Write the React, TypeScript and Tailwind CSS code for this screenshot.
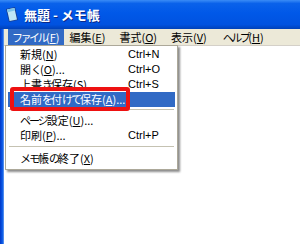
import React from "react";

type Item = { label: string; key: string; tail?: string; shortcut?: string; active?: boolean };

// kana in the original UI font are narrower than in Noto CJK
function Narrow({ text, wide }: { text: string; wide?: boolean }) {
  return (
    <>
      {Array.from(text).map((ch, i) =>
        /[\u3040-\u30ff]/.test(ch) ? (
          <span key={i} className={wide ? "tracking-[-2.5px]" : "tracking-[-2px]"}>
            {ch}
          </span>
        ) : (
          <span key={i}>{ch}</span>
        )
      )}
    </>
  );
}

function Mn({ label, k, tail, wide }: { label: string; k: string; tail?: string; wide?: boolean }) {
  return (
    <span className="whitespace-nowrap">
      <Narrow text={label} wide={wide} />(<span className="underline underline-offset-1">{k}</span>){tail}
    </span>
  );
}

function NotepadIcon() {
  return (
    <svg width="16" height="17" viewBox="0 0 16 17">
      <polygon points="2,3 11,1 14,14 5,16" fill="#1b3f8f" />
      <polygon points="3,3.6 10.4,2 13,13.4 5.6,15" fill="#bfe6f6" />
      <polygon points="3,3.6 10.4,2 11,4.6 3.6,6.2" fill="#7ec4ea" />
    </svg>
  );
}

function MenuRow({ item }: { item: Item }) {
  return (
    <div
      className={
        "h-[15px] mx-[2px] pl-[12px] flex items-center " +
        (item.active ? "bg-[#316ac5] text-white" : "")
      }
    >
      <div className="w-[108px]">
        <Mn label={item.label} k={item.key} tail={item.tail} />
      </div>
      {item.shortcut && (
        <div className="font-['Liberation_Sans',sans-serif] text-[11px]">{item.shortcut}</div>
      )}
    </div>
  );
}

const group1: Item[] = [
  { label: "新規", key: "N", shortcut: "Ctrl+N" },
  { label: "開く", key: "O", tail: "...", shortcut: "Ctrl+O" },
  { label: "上書き保存", key: "S", shortcut: "Ctrl+S" },
  { label: "名前を付けて保存", key: "A", tail: "...", active: true },
];
const group2: Item[] = [
  { label: "ページ設定", key: "U", tail: "..." },
  { label: "印刷", key: "P", tail: "...", shortcut: "Ctrl+P" },
];

export default function App() {
  return (
    <div className="relative w-[300px] h-[244px] overflow-hidden bg-white text-black text-[11px] leading-none font-['Noto_Sans_CJK_JP',sans-serif]">
      <div className="flex flex-col h-full">
        {/* title bar */}
        <div className="h-[29px] flex items-center pl-[4px] gap-[4px] bg-[linear-gradient(to_bottom,#3a8cf6_0%,#0a62ea_12%,#0058e8_45%,#0052e0_85%,#0041b8_100%)]">
          <NotepadIcon />
          <span className="text-white font-bold text-[13px] [text-shadow:1px_1px_#0b2a8a]">無題 - メモ帳</span>
        </div>
        <div className="flex flex-1">
          <div className="w-[4px] bg-[linear-gradient(to_right,#0036c8,#0b5ae6_60%,#6ea0f0)]" />
          <div className="flex-1 flex flex-col">
            {/* menu bar */}
            <div className="h-[16px] flex items-center bg-[#ece9d8] pl-[4px]">
              <div className="h-full flex items-center px-[4px] bg-[#316ac5] text-white">
                <Mn label="ファイル" k="F" wide />
              </div>
              <div className="px-[6px]"><Mn label="編集" k="E" /></div>
              <div className="px-[6px] ml-[2px]"><Mn label="書式" k="O" /></div>
              <div className="px-[6px] ml-[2px]"><Mn label="表示" k="V" /></div>
              <div className="px-[6px] ml-[4px]"><Mn label="ヘルプ" k="H" wide /></div>
            </div>
            <div className="flex-1 bg-white border-t border-[#d4d0c8]" />
          </div>
        </div>
      </div>

      {/* File menu dropdown */}
      <div className="absolute left-[5px] top-[45px] w-[173px] bg-white border border-[#aca899] pt-[1px] pb-[3px] shadow-[2px_2px_2px_rgba(0,0,0,0.45)]">
        {group1.map((it) => (
          <MenuRow key={it.label} item={it} />
        ))}
        <div className="mx-[3px] mt-[2px] mb-[3px] h-px bg-[#c5c2b2]" />
        {group2.map((it) => (
          <MenuRow key={it.label} item={it} />
        ))}
        <div className="mx-[3px] mt-[3px] mb-[3px] h-px bg-[#c5c2b2]" />
        <div className="h-[16px] mx-[2px] pl-[12px] flex items-center">
          <Mn label="メモ帳の終了" k="X" />
        </div>
      </div>

      {/* red annotation */}
      <div className="absolute left-[10px] top-[87px] w-[120px] h-[24px] border-[4px] border-[#ee1111] rounded-[3px]" />
    </div>
  );
}
